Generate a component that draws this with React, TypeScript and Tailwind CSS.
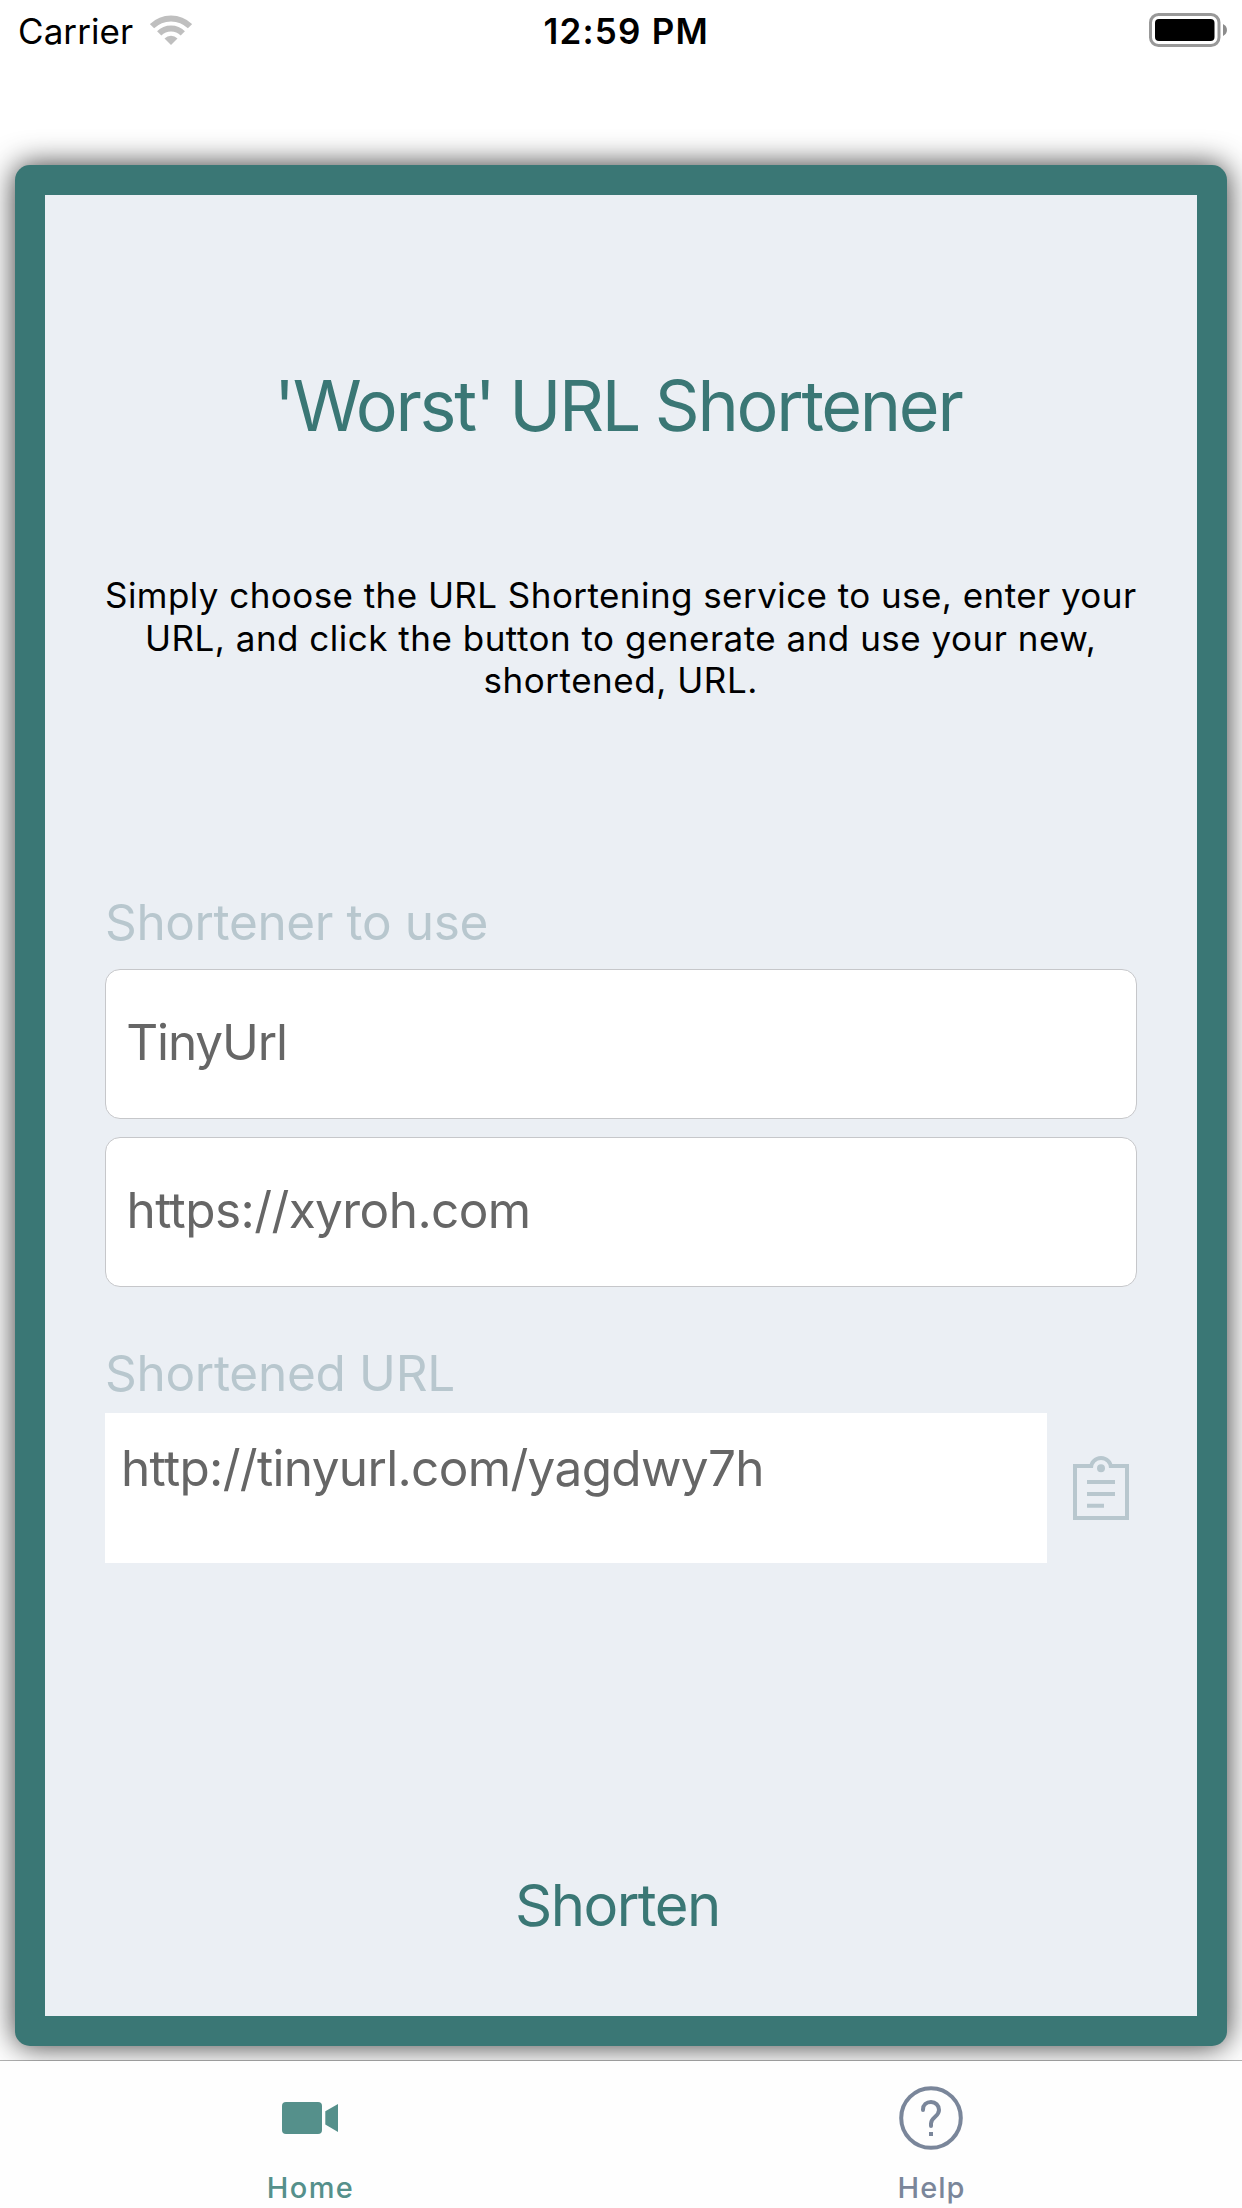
function WifiIcon() {
  return (
    <svg className="ml-[17px] mt-[15px] h-[30px] w-[42px]" viewBox="0 0 42 30" fill="none">
      <path d="M2 11.2A27 27 0 0 1 40 11.2" stroke="#bfbfbf" strokeWidth="6" />
      <path d="M9.2 18.4A16.6 16.6 0 0 1 32.8 18.4" stroke="#bfbfbf" strokeWidth="6" />
      <path d="M14.5 23.5A9.2 9.2 0 0 1 27.5 23.5L21 30Z" fill="#bfbfbf" />
    </svg>
  );
}

function BatteryIcon() {
  return (
    <svg className="mt-[13px] h-[34px] w-[79px]" viewBox="0 0 79 34" fill="none">
      <rect x="1.5" y="1.5" width="68.5" height="31" rx="8" stroke="#999999" strokeWidth="3" />
      <rect x="6" y="6" width="59.5" height="22" rx="4" fill="#000000" />
      <path d="M74 11C79.3 13.5 79.3 20.5 74 23Z" fill="#8c8c8c" />
    </svg>
  );
}

function ClipboardIcon() {
  return (
    <svg className="h-16 w-14" viewBox="0 0 56 64" fill="none" stroke="#b8c7ce" strokeWidth="4">
      <path d="M18.6 10H2V62H54V10H37.4" />
      <path d="M18 12A10 10 0 0 1 38 12" />
      <circle cx="28" cy="12.3" r="4" fill="#b8c7ce" stroke="none" />
      <path d="M14 26H42M14 38H42M14 49.7H31" />
    </svg>
  );
}

function VideoIcon() {
  return (
    <svg className="-ml-px h-16 w-16" viewBox="0 0 64 64" fill="#55908b">
      <rect x="4" y="16" width="40" height="32" rx="4" />
      <path d="M47.3 25.2L60 18V46L47.3 38.6Z" />
    </svg>
  );
}

function HelpIcon() {
  return (
    <svg className="-ml-px h-16 w-16" viewBox="0 0 64 64" fill="none" stroke="#7a869a" strokeWidth="4">
      <circle cx="32" cy="32" r="29.8" />
      <path
        d="M24 24V23.5C24 19 27.5 16 32 16S40 19.3 40 24C40 31 32 31 32 37.5V40"
        strokeLinecap="round"
      />
      <path d="M32 46V50" />
    </svg>
  );
}

function Field({ children }: { children: React.ReactNode }) {
  return (
    <div className="h-[150px] rounded-[15px] border border-[#c6c7ca] bg-white pt-[42px] leading-[60px] text-[#666666]">
      {children}
    </div>
  );
}

export default function App() {
  return (
    <div className="flex h-[2208px] w-[1242px] flex-col overflow-hidden bg-white font-['Inter','Liberation_Sans',sans-serif]">
      <header className="grid h-[165px] shrink-0 grid-cols-3 items-start text-[35px] leading-[42px] text-black">
        <div className="flex items-start pl-[18px]">
          <span className="mt-[10px] tracking-[0.075px]">Carrier</span>
          <WifiIcon />
        </div>
        <span className="mt-[10px] pl-[129.5px] font-semibold tracking-[1.2px]">12:59 PM</span>
        <div className="flex justify-end pr-[14px]">
          <BatteryIcon />
        </div>
      </header>

      <main className="mx-[15px] mb-[14px] h-[1881px] shrink-0 rounded-[15px] bg-[#3a7775] p-[30px] shadow-[0_0_30px_rgba(0,0,0,0.8)]">
        <div className="flex h-full flex-col bg-[#ebeff4] px-[60px]">
          <h1 className="mt-[169px] whitespace-nowrap pl-[169px] text-[70px] leading-[84px] tracking-[-2.3px] [word-spacing:-1.6px] text-[#3a7775]">
            'Worst' URL Shortener
          </h1>
          <p className="mt-[126px] whitespace-nowrap text-[35px] leading-[42.7px] text-black">
            <span className="block tracking-[0.44px]">
              Simply choose the URL Shortening service to use, enter your
            </span>
            <span className="block pl-[40px] tracking-[0.496px]">
              URL, and click the button to generate and use your new,
            </span>
            <span className="block pl-[378.4px] tracking-[0.55px]">shortened, URL.</span>
          </p>

          <div className="mt-[189.9px] text-[49.5px]">
            <label className="block leading-[60px] tracking-[-0.377px] text-[#b8c7ce]">Shortener to use</label>
            <div className="mt-[17px] flex flex-col gap-[18px]">
              <Field>
                <span className="block pl-[20.3px] tracking-[-1.137px]">TinyUrl</span>
              </Field>
              <Field>
                <span className="block pl-[20.5px] tracking-[-0.58px]">https://xyroh.com</span>
              </Field>
            </div>
            <label className="mt-[56px] block leading-[60px] tracking-[-0.293px] text-[#b8c7ce]">Shortened URL</label>
            <div className="mt-[10px] flex items-center">
              <div className="h-[150px] w-[942px] bg-white pl-[16px] pt-[25px] leading-[60px] tracking-[-0.668px] text-[#666666]">
                http://tinyurl.com/yagdwy7h
              </div>
              <button className="ml-[26px]" aria-label="Copy">
                <ClipboardIcon />
              </button>
            </div>
          </div>

          <button className="mt-[307px] block pl-[410px] text-left text-[58px] leading-[70px] tracking-[-1.542px] text-[#3a7775]">
            Shorten
          </button>
        </div>
      </main>

      <nav className="grid h-[148px] shrink-0 grid-cols-2 border-t border-black/30 bg-[#fefefe] bg-clip-padding text-[29px] font-medium leading-[35px]">
        <div className="flex flex-col items-center pt-[25px] text-[#55908b]">
          <VideoIcon />
          <span className="mt-5 tracking-[1.377px]">Home</span>
        </div>
        <div className="flex flex-col items-center pt-[25px] text-[#7a869a]">
          <HelpIcon />
          <span className="mt-5 tracking-[1.021px]">Help</span>
        </div>
      </nav>
    </div>
  );
}
